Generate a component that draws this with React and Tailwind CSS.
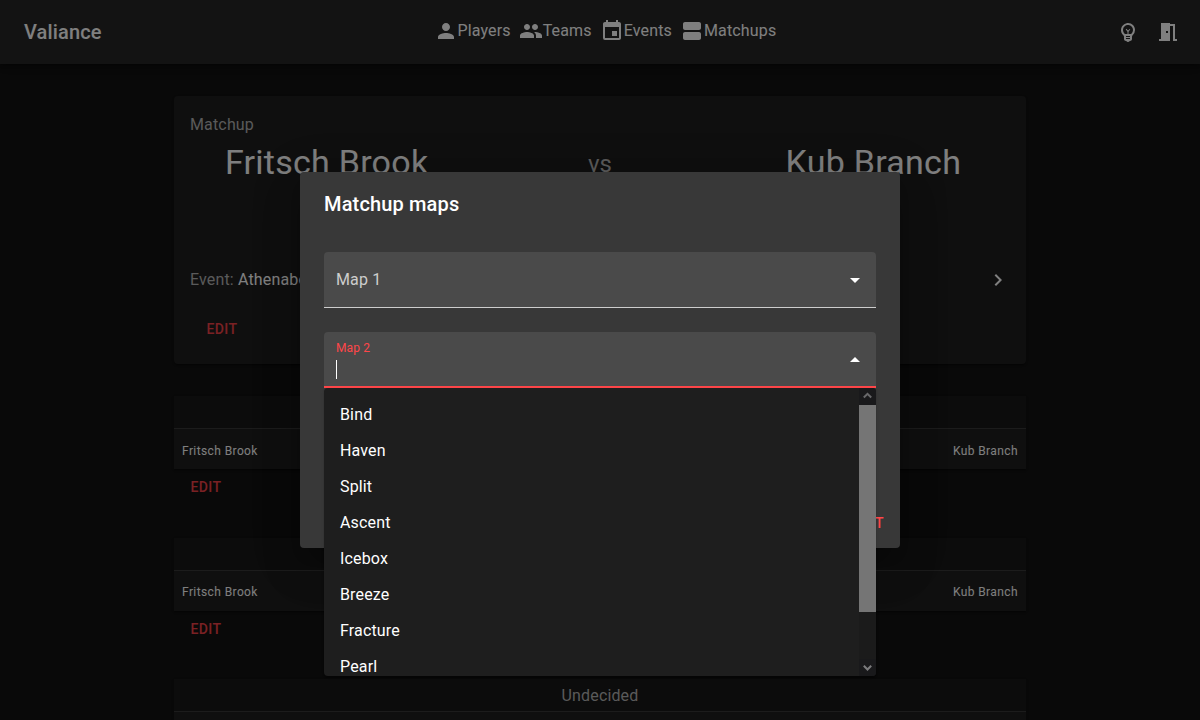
import {
  MdPerson,
  MdPeople,
  MdEvent,
  MdViewAgenda,
  MdOutlineEmojiObjects,
  MdMeetingRoom,
  MdChevronRight,
  MdArrowDropDown,
  MdArrowDropUp,
} from "react-icons/md";

const links = [
  { label: "Players", Icon: MdPerson },
  { label: "Teams", Icon: MdPeople },
  { label: "Events", Icon: MdEvent },
  { label: "Matchups", Icon: MdViewAgenda },
];

const maps = ["Bind", "Haven", "Split", "Ascent", "Icebox", "Breeze", "Fracture", "Pearl"];

function NavBar() {
  return (
    <header className="relative flex h-16 shrink-0 items-center justify-between bg-[#272727] pl-6 pr-3 shadow-[0_2px_4px_-1px_rgba(0,0,0,0.2),0_4px_5px_rgba(0,0,0,0.14),0_1px_10px_rgba(0,0,0,0.12)]">
      <h1 className="text-xl font-medium leading-8 tracking-[0.15px]">Valiance</h1>
      <nav className="flex gap-2 pb-0.5 pl-px">
        {links.map(({ label, Icon }) => (
          <a key={label} className="flex h-6 items-start leading-6 tracking-[0.15px]">
            <Icon className="size-6" />
            <span className="-ml-[0.5px] mr-[0.5px]">{label}</span>
          </a>
        ))}
      </nav>
      <div className="flex">
        <button className="p-2"><MdOutlineEmojiObjects className="size-6" /></button>
        <button className="p-2"><MdMeetingRoom className="size-6" /></button>
      </div>
    </header>
  );
}

function EditButton() {
  return (
    <button className="flex h-[30px] items-center px-[8.5px] text-sm font-medium tracking-[0.4px] text-[#f44349]">
      EDIT
    </button>
  );
}

function MatchupCard() {
  return (
    <section className="h-[268px] rounded bg-[#1e1e1e] px-4 pt-[17px] shadow-[0_2px_1px_-1px_rgba(0,0,0,0.2),0_1px_1px_rgba(0,0,0,0.14),0_1px_3px_rgba(0,0,0,0.12)]">
      <p className="leading-6 tracking-[0.15px] text-[#b4b4b4]">Matchup</p>
      <div className="grid grid-cols-3 items-center text-center">
        <h2 className="pt-1 text-[34px] leading-[42px] tracking-[0.25px]">Fritsch Brook</h2>
        <span className="pt-2 text-2xl leading-8 text-[#b4b4b4]">vs</span>
        <h2 className="pt-1 text-[34px] leading-[42px] tracking-[0.25px]">Kub Branch</h2>
      </div>
      <div className="mt-[81px] flex h-8 items-center justify-between">
        <p className="tracking-[0.15px] text-[#b4b4b4]">
          Event: <span className="text-white">Athenaborough</span>
        </p>
        <MdChevronRight className="size-6" />
      </div>
      <div className="mt-[18px] pl-2">
        <EditButton />
      </div>
    </section>
  );
}

function MapTable({ title }) {
  return (
    <section className="h-[141.5px] shrink-0">
      <div className="shadow-[0_2px_1px_-1px_rgba(0,0,0,0.2),0_1px_1px_rgba(0,0,0,0.14),0_1px_3px_rgba(0,0,0,0.12)]">
        <div className="h-[33px] border-b border-[#383838] bg-[#181818] pt-px text-center leading-8 tracking-[0.15px] text-[#b4b4b4]">
          {title}
        </div>
        <div className="flex h-10 items-center justify-between bg-[#1e1e1e] px-2 pt-[3px] text-xs tracking-[0.4px] text-white">
          <span>Fritsch Brook</span>
          <span>Kub Branch</span>
        </div>
      </div>
      <div className="pl-2 pt-[3px]">
        <EditButton />
      </div>
    </section>
  );
}

function MapField({ label }) {
  return (
    <div className="flex h-14 items-center justify-between rounded-t border-b border-[#cdcdcd] bg-[#4a4a4a] pl-3 pr-[9px]">
      <span className="tracking-[0.15px] text-[#cdcdcd]">{label}</span>
      <MdArrowDropDown className="size-6" />
    </div>
  );
}

function MapList() {
  return (
    <div className="absolute left-0 top-[calc(100%+2px)] z-10 flex h-72 w-full overflow-hidden rounded bg-[#1e1e1e] shadow-[0_2px_1px_-1px_rgba(0,0,0,0.2),0_1px_1px_rgba(0,0,0,0.14),0_1px_3px_rgba(0,0,0,0.12)]">
      <ul className="flex-1 pt-[9px]">
        {maps.map((name) => (
          <li key={name} className="h-9 px-4 leading-9 tracking-[0.15px]">{name}</li>
        ))}
      </ul>
      <div className="flex w-[17px] flex-col bg-[#1b1b1b]">
        <div className="flex h-[17px] items-center justify-center bg-[#19191b] pb-0.5 text-[#68686a]">
          <svg viewBox="0 0 9 7" className="h-[7px] w-[9px]"><path d="M.8 5.5 4.5 1.8l3.7 3.7" fill="none" stroke="currentColor" strokeWidth="2" /></svg>
        </div>
        <div className="h-[207px] bg-[#757575]" />
        <div className="mt-auto flex h-[17px] items-center justify-center bg-[#19191b] text-[#7b7b7d]">
          <svg viewBox="0 0 9 7" className="h-[7px] w-[9px]"><path d="M.8 1.8 4.5 5.5l3.7-3.7" fill="none" stroke="currentColor" strokeWidth="2" /></svg>
        </div>
      </div>
    </div>
  );
}

function MapsDialog() {
  return (
    <div className="flex h-[376px] w-[600px] flex-col rounded bg-[#383838] px-6 shadow-[0_11px_15px_-7px_rgba(0,0,0,0.2),0_24px_38px_3px_rgba(0,0,0,0.14),0_9px_46px_8px_rgba(0,0,0,0.12)]">
      <h2 className="py-4 text-xl font-medium leading-8 tracking-[0.15px]">Matchup maps</h2>
      <div className="flex flex-col gap-6 pt-4">
        <MapField label="Map 1" />
        <div className="relative flex h-14 items-center justify-between rounded-t border-b-2 border-[#ff4649] bg-[#4a4a4a] pl-3 pr-[9px]">
          <div className="flex flex-col">
            <span className="text-xs leading-4 tracking-[0.11px] text-[#ff4649]">Map 2</span>
            <span className="mt-1 h-[19px] w-px bg-white" />
          </div>
          <MdArrowDropUp className="mt-0.5 size-6" />
          <MapList />
        </div>
        <MapField label="Map 3" />
      </div>
      <div className="-mr-4 mt-auto flex justify-end pb-[7px]">
        <button className="h-9 px-2 text-sm font-medium tracking-[0.4px] text-[#ff4649]">SUBMIT</button>
      </div>
    </div>
  );
}

export default function App() {
  return (
    <div className="relative h-[720px] overflow-hidden bg-[#121212] font-['Roboto',sans-serif] text-white">
      <div className="flex h-full flex-col">
        <NavBar />
        <main className="mx-auto w-[852px] pt-8">
          <MatchupCard />
          <div className="flex flex-col pt-8">
            <MapTable title="" />
            <MapTable title="" />
            <MapTable title="Undecided" />
          </div>
        </main>
      </div>
      <div className="absolute inset-0 flex items-center justify-center bg-black/50">
        <MapsDialog />
      </div>
    </div>
  );
}
